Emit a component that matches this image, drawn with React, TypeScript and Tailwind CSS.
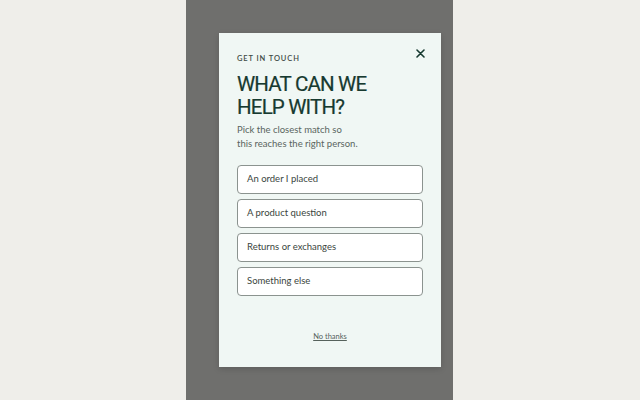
import React from "react";

const options = ["An order I placed", "A product question", "Returns or exchanges", "Something else"];

export default function App() {
  return (
    <div
      className="w-[640px] h-[400px] bg-[#efeeea] flex justify-center overflow-hidden"
      style={{ fontFamily: "Lato, 'Noto Sans', sans-serif" }}
    >
      <div className="w-[267px] h-[400px] bg-[#6f6f6d] ml-[-1px] pt-[33px] pl-[33px]">
        <div className="relative w-[222px] h-[334px] bg-[#f0f7f4] shadow-[0_2px_6px_rgba(0,0,0,0.15)] pt-[21px] px-[18px] flex flex-col">
          <button className="absolute top-[13px] left-[194px] w-[14px] h-[14px] flex items-center justify-center text-[#173a30]">
            <svg width="9" height="9" viewBox="0 0 9 9" fill="none" stroke="currentColor" strokeWidth="1.6" strokeLinecap="round">
              <path d="M1 1 L8 8 M8 1 L1 8" />
            </svg>
          </button>
          <div className="text-[7.5px] leading-[10px] tracking-[0.12em] font-semibold text-[#3e4a45]">GET IN TOUCH</div>
          <h1
            className="mt-[9px] text-[20.5px] leading-[23px] font-normal text-[#173a30] tracking-[-0.04em]"
            style={{ fontFamily: "Roboto, sans-serif", WebkitTextStroke: "0.2px #173a30" }}
          >
            WHAT CAN WE
            <br />
            HELP WITH?
          </h1>
          <p className="mt-[4px] text-[9.5px] leading-[13.5px] text-[#5a6560]">
            Pick the closest match so
            <br />
            this reaches the right person.
          </p>
          <div className="mt-[15px] flex flex-col gap-[5px] w-[186px]">
            {options.map((o) => (
              <button
                key={o}
                className="h-[29px] w-full text-left pl-[9px] bg-white border border-[#8b938f] rounded-[4px] text-[9.5px] text-[#3a4540]"
              >
                {o}
              </button>
            ))}
          </div>
          <div className="mt-[25px] text-center">
            <span className="text-[7.5px] underline text-[#56625c]">No thanks</span>
          </div>
        </div>
      </div>
    </div>
  );
}
